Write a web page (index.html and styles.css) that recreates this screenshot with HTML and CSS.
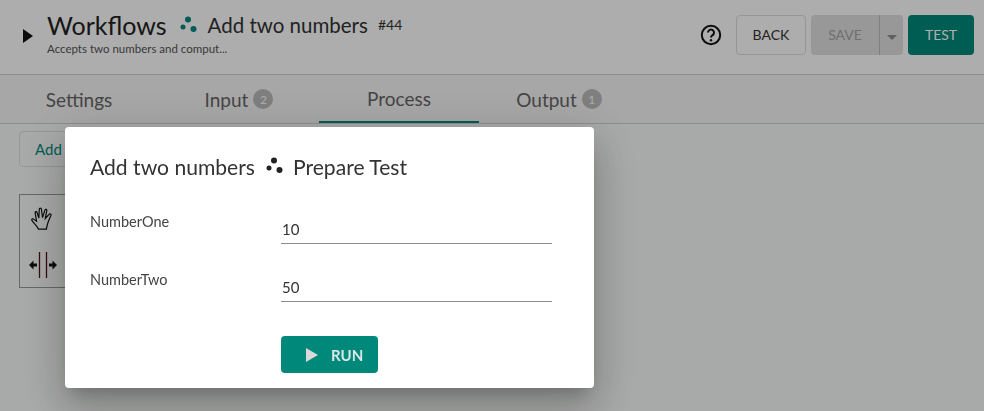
FILE: index.html
```html
<!DOCTYPE html>
<html lang="en">
<head>
  <meta charset="UTF-8" />
  <title>Add two numbers</title>
  <link rel="stylesheet" href="styles.css">
</head>
<body>
  <header class="topbar">
    <svg class="expand" width="12" height="14" viewBox="0 0 12 14"><path d="M1 0l10 7-10 7z" /></svg>
    <div class="titles">
      <div class="title-row">
        <span class="crumb">Workflows</span>
        <svg class="dots dots-green" width="18" height="18" viewBox="0 0 18 18"><circle cx="8" cy="3.500" r="3" /><circle cx="3" cy="11" r="2.500" /><circle cx="13.500" cy="13" r="3" /></svg>
        <span class="name">Add two numbers</span>
        <span class="num">#44</span>
      </div>
      <div class="desc">Accepts two numbers and comput...</div>
    </div>
    <div class="top-actions">
      <svg class="help" width="22" height="22" viewBox="0 0 22 22"><circle cx="11" cy="11" r="9.200" /><path d="M8 8.600a3 3 0 1 1 4.600 2.500c-1.100.7-1.600 1.200-1.600 2.400" /><circle class="help-dot" cx="11" cy="16.200" r="1.200" /></svg>
      <button class="btn btn-back">BACK</button>
      <div class="split">
        <button class="btn btn-save">SAVE</button>
        <button class="btn btn-caret"><span class="caret"></span></button>
      </div>
      <button class="btn btn-test">TEST</button>
    </div>
  </header>

  <nav class="tabs">
    <div class="tab">Settings</div>
    <div class="tab">Input <span class="badge">2</span></div>
    <div class="tab active">Process</div>
    <div class="tab">Output <span class="badge">1</span></div>
  </nav>

  <div class="toolbar">
    <button class="btn-add">Add step</button>
  </div>

  <div class="palette">
    <svg width="24" height="25" viewBox="0 0 26 26"><path d="M8 24.500c-1-3-5-6-7-9.500-.8-1.300.8-2.300 1.800-1.300L6 16 4.500 7c-.3-1.500 1.700-2 2.100-.5L8.500 12.500 9 3c0-1.600 2.200-1.600 2.300 0L12.500 12l2.500-8c.4-1.500 2.400-1 2.100.5L15.500 13l4-4.500c1-1.200 2.700-.2 2 1.200L18.500 17c-.8 2.500-1.500 5-1.800 7.500z" /></svg>
    <svg width="28" height="28" viewBox="0 0 28 28"><path class="bar-line" d="M10.500 1v26M17.500 1v26" /><path class="arrow" d="M0 14l4.500-4.500v3H8v3H4.500v3zM28 14l-4.500-4.500v3H20v3h3.500v3z" /></svg>
  </div>

  <div class="overlay"></div>

  <div class="modal">
    <h2 class="modal-title">
      Add two numbers
      <svg class="dots dots-dark" width="18" height="18" viewBox="0 0 18 18"><circle cx="8" cy="3.500" r="3" /><circle cx="3" cy="11" r="2.500" /><circle cx="13.500" cy="13" r="3" /></svg>
      Prepare Test
    </h2>
    <div class="field">
      <label class="field-label">NumberOne</label>
      <div class="field-value">10</div>
    </div>
    <div class="field">
      <label class="field-label">NumberTwo</label>
      <div class="field-value">50</div>
    </div>
    <div class="run-row">
      <button class="btn-run">
        <svg width="14" height="14" viewBox="0 0 14 14"><path d="M1 0l12 7-12 7z" /></svg>
        RUN
      </button>
    </div>
  </div>
</body>
</html>
```

FILE: styles.css
```css
:root {
  --primary: #00897b;
  --text: #222;
  --line: #d0d0d0;
}

* {
  box-sizing: border-box;
}

html, body {
  height: 100%;
}

body {
  margin: 0;
  font-family: 'Lato', 'Noto Sans', sans-serif;
  color: var(--text);
  background: #f8fbf9;
  overflow: hidden;
}

button {
  font-family: inherit;
}

.topbar {
  height: 75px;
  display: flex;
  align-items: center;
  padding: 0 10px 5px 22px;
  background: #fff;
  border-bottom: 1px solid var(--line);
}

.expand {
  fill: #111;
  margin-right: 13px;
  margin-top: 2px;
}

.titles {
  flex: 1;
  margin-top: -4px;
}

.title-row {
  display: flex;
  align-items: center;
  gap: 10px;
  height: 30px;
}

.crumb {
  font-size: 25px;
  color: #222;
}

.name {
  font-size: 20.500px;
  color: #333;
}

.num {
  font-size: 14px;
  color: #333;
  margin-top: -1px;
}

.dots-green {
  fill: var(--primary);
  margin-left: 3px;
}

.dots-dark {
  fill: #222;
  margin: 0 3px 0 5px;
}

.desc {
  font-size: 11.500px;
  color: #555;
  margin-top: 2px;
}

.top-actions {
  display: flex;
  align-items: center;
}

.help {
  fill: none;
  stroke: #111;
  stroke-width: 2;
  margin-right: 14px;
}

.help-dot {
  fill: #111;
  stroke: none;
}

.btn {
  height: 40px;
  font-size: 14px;
  border-radius: 4px;
  border: 1px solid #ddd;
  background: #fff;
  color: #333;
}

.btn-back {
  width: 70px;
  margin-right: 5px;
}

.split {
  display: flex;
  margin-right: 5px;
}

.btn-save {
  width: 69px;
  border: 0;
  border-right: 1px solid #bbb;
  border-radius: 4px 0 0 4px;
  background: #e0e0e0;
  color: #a6a6a6;
}

.btn-caret {
  width: 23px;
  border: 0;
  border-radius: 0 4px 4px 0;
  background: #e0e0e0;
  padding: 0;
}

.caret {
  display: inline-block;
  border: 5px solid transparent;
  border-top: 5px solid #8c8c8c;
  border-bottom: 0;
}

.btn-test {
  width: 66px;
  border: 0;
  background: var(--primary);
  color: #fff;
}

.tabs {
  height: 49px;
  display: flex;
  margin-left: -1px;
  background: #f6f6f6;
  border-bottom: 1px solid var(--line);
}

.tab {
  width: 160px;
  display: flex;
  align-items: center;
  justify-content: center;
  gap: 5px;
  font-size: 19px;
  color: #666;
}

.tab.active {
  border-bottom: 2px solid var(--primary);
}

.badge {
  width: 20px;
  height: 20px;
  border-radius: 50%;
  background: #bbb;
  color: #fff;
  font-size: 12px;
  display: flex;
  align-items: center;
  justify-content: center;
}

.toolbar {
  padding: 7px 19px;
}

.btn-add {
  height: 36px;
  width: 100px;
  border: 1px solid #ddd;
  border-radius: 4px;
  background: transparent;
  color: var(--primary);
  font-size: 15px;
  text-align: left;
  padding-left: 15px;
}

.palette {
  width: 60px;
  height: 94px;
  margin: 20px 0 0 19px;
  padding: 11px 12px 0 0;
  border: 1px solid #999;
  display: flex;
  flex-direction: column;
  align-items: center;
  gap: 20px;
}

.palette svg {
  fill: none;
  stroke: #111;
  stroke-width: 1.300;
}

.palette .bar-line {
  stroke: #511;
}

.palette .arrow {
  fill: #111;
  stroke: none;
}

.overlay {
  position: fixed;
  inset: 0;
  background: rgba(0, 0, 0, 0.32);
}

.modal {
  position: fixed;
  left: 65px;
  top: 127px;
  width: 529px;
  height: 261px;
  padding: 26px 42px 0 25px;
  background: #fff;
  border-radius: 4px;
  box-shadow: 0 11px 15px -7px rgba(0, 0, 0, 0.2), 0 24px 38px 3px rgba(0, 0, 0, 0.14), 0 9px 46px 8px rgba(0, 0, 0, 0.12);
}

.modal-title {
  display: flex;
  align-items: center;
  gap: 6px;
  margin: 0 0 28px;
  height: 26px;
  font-size: 21.100px;
  font-weight: 400;
  color: #333;
}

.field {
  display: flex;
  height: 58px;
}

.field-label {
  width: 191px;
  font-size: 14.500px;
  color: #444;
  padding-top: 6px;
}

.field-value {
  flex: 1;
  height: 37px;
  padding-top: 13px;
  padding-left: 1px;
  font-size: 15px;
  color: #333;
  border-bottom: 1px solid #8c8c8c;
}

.run-row {
  padding: 13px 0 0 191px;
}

.btn-run {
  width: 97px;
  height: 37px;
  border: 0;
  border-radius: 4px;
  background: var(--primary);
  color: #d9e8e6;
  font-size: 15px;
  font-weight: 700;
  display: flex;
  align-items: center;
  gap: 12px;
  padding-left: 24px;
}

.btn-run svg {
  fill: #d9d9d9;
}
```
